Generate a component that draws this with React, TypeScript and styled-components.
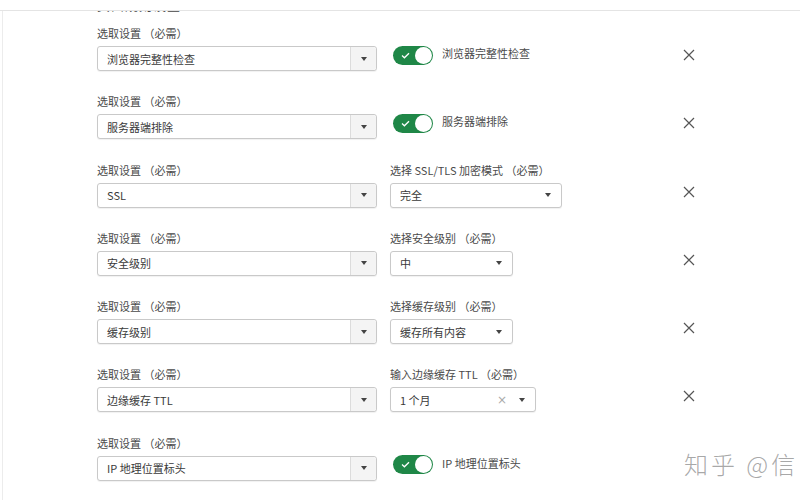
import React from "react";
import styled, { createGlobalStyle } from "styled-components";

const Global = createGlobalStyle`
  html, body { margin: 0; padding: 0; background: #fff; }
  body { font-family: "Noto Sans CJK SC", "Noto Sans", sans-serif; color: #333; }
`;

const Page = styled.div`
  position: relative;
  width: 800px;
  height: 500px;
  overflow: hidden;
  background: #fff;
`;

const TopBar = styled.div`
  height: 10px;
  border-bottom: 1px solid #e4e4e4;
  position: relative;
  z-index: 1;
  background: #fff;
`;

const Body = styled.div`
  margin-left: 2px;
  border-left: 1px solid #ececec;
  height: 489px;
  padding-left: 94px;
  display: flex;
  flex-direction: column;
`;

const SectionTitle = styled.div`
  font-size: 13px;
  line-height: 16px;
  height: 16px;
  margin-top: -14px;
  color: #444;
  letter-spacing: 1px;
`;

const List = styled.div`
  display: flex;
  flex-direction: column;
  gap: 23.3px;
  margin-top: 12px;
`;

const Row = styled.div`
  display: grid;
  grid-template-columns: 280px 274px 24px;
  grid-template-rows: 16px 24px;
  column-gap: 13px;
  row-gap: 5px;
`;

const Label = styled.div`
  font-size: 11px;
  line-height: 16px;
  color: #4a4a4a;
  white-space: nowrap;
`;

const SelectBox = styled.div<{ $w?: number }>`
  box-sizing: border-box;
  height: 25px;
  width: ${(p) => (p.$w ? `${p.$w}px` : "100%")};
  border: 1px solid #c9c9c9;
  border-radius: 3px;
  box-shadow: 0 1px 1px rgba(0, 0, 0, 0.06);
  display: flex;
  align-items: center;
  background: #fff;
  font-size: 11px;
  color: #3a3a3a;
`;

const Value = styled.div`
  flex: 1;
  padding-left: 9px;
  white-space: nowrap;
`;

const DropButton = styled.div`
  width: 25px;
  align-self: stretch;
  border-left: 1px solid #dcdcdc;
  background: #f4f4f4;
  border-radius: 0 3px 3px 0;
  display: flex;
  align-items: center;
  justify-content: center;
`;

const Caret = styled.span`
  width: 0;
  height: 0;
  border-left: 3.5px solid transparent;
  border-right: 3.5px solid transparent;
  border-top: 4px solid #444;
`;

const SmallCaretBox = styled.div`
  width: 26px;
  display: flex;
  justify-content: center;
  align-items: center;
`;

const ClearX = styled.span`
  color: #aaa;
  font-size: 12px;
  margin-right: 2px;
  font-family: "DejaVu Sans", sans-serif;
`;

const ToggleGroup = styled.div`
  display: flex;
  align-items: center;
  gap: 9px;
  margin-left: 3px;
  margin-top: -1px;
  height: 20px;
`;

const Track = styled.div`
  box-sizing: border-box;
  width: 40px;
  height: 19px;
  border-radius: 10px;
  background: #1f8747;
  position: relative;
  display: flex;
  align-items: center;
  justify-content: space-between;
  padding: 0 1px 0 8px;
`;

const Knob = styled.div`
  width: 17px;
  height: 17px;
  border-radius: 50%;
  background: #fff;
`;

const ToggleText = styled.span`
  font-size: 11px;
  color: #4a4a4a;
  margin-top: -4px;
  white-space: nowrap;
`;

const Remove = styled.div`
  grid-column: 3;
  grid-row: 2;
  display: flex;
  align-items: center;
  justify-content: center;
  margin-top: -6px;
`;

const Watermark = styled.div`
  position: absolute;
  left: 684px;
  top: 446px;
  font-size: 24px;
  color: rgba(140, 140, 140, 0.75);
  letter-spacing: 3px;
  white-space: nowrap;
  font-family: "Noto Sans CJK SC", sans-serif;
  font-weight: 300;
`;

type Side =
  | { kind: "toggle"; text: string }
  | { kind: "select"; label: string; value: string; width: number; clear?: boolean };

const rows: { value: string; side: Side; remove: boolean }[] = [
  { value: "浏览器完整性检查", side: { kind: "toggle", text: "浏览器完整性检查" }, remove: true },
  { value: "服务器端排除", side: { kind: "toggle", text: "服务器端排除" }, remove: true },
  { value: "SSL", side: { kind: "select", label: "选择 SSL/TLS 加密模式 （必需）", value: "完全", width: 172 }, remove: true },
  { value: "安全级别", side: { kind: "select", label: "选择安全级别 （必需）", value: "中", width: 123 }, remove: true },
  { value: "缓存级别", side: { kind: "select", label: "选择缓存级别 （必需）", value: "缓存所有内容", width: 123 }, remove: true },
  { value: "边缘缓存 TTL", side: { kind: "select", label: "输入边缘缓存 TTL （必需）", value: "1 个月", width: 146, clear: true }, remove: true },
  { value: "IP 地理位置标头", side: { kind: "toggle", text: "IP 地理位置标头" }, remove: false },
];

const Check = () => (
  <svg width="9" height="7" viewBox="0 0 9 7">
    <path d="M1 3.6 L3.4 5.8 L8 1.2" fill="none" stroke="#fff" strokeWidth="1.3" />
  </svg>
);

const XIcon = () => (
  <svg width="12" height="12" viewBox="0 0 12 12">
    <path d="M1 1 L11 11 M11 1 L1 11" stroke="#555" strokeWidth="1.2" />
  </svg>
);

export default function App() {
  return (
    <Page>
      <Global />
      <TopBar />
      <Body>
        <SectionTitle>页面规则设置</SectionTitle>
        <List>
          {rows.map((r, i) => (
            <Row key={i}>
              <Label>选取设置 （必需）</Label>
              {r.side.kind === "select" ? <Label>{r.side.label}</Label> : <span />}
              <span />
              <SelectBox>
                <Value>{r.value}</Value>
                <DropButton>
                  <Caret />
                </DropButton>
              </SelectBox>
              {r.side.kind === "toggle" ? (
                <ToggleGroup>
                  <Track>
                    <Check />
                    <Knob />
                  </Track>
                  <ToggleText>{r.side.text}</ToggleText>
                </ToggleGroup>
              ) : (
                <SelectBox $w={r.side.width}>
                  <Value>{r.side.value}</Value>
                  {r.side.clear && <ClearX>×</ClearX>}
                  <SmallCaretBox>
                    <Caret />
                  </SmallCaretBox>
                </SelectBox>
              )}
              {r.remove ? (
                <Remove>
                  <XIcon />
                </Remove>
              ) : (
                <span />
              )}
            </Row>
          ))}
        </List>
      </Body>
      <Watermark>知乎 @信</Watermark>
    </Page>
  );
}
